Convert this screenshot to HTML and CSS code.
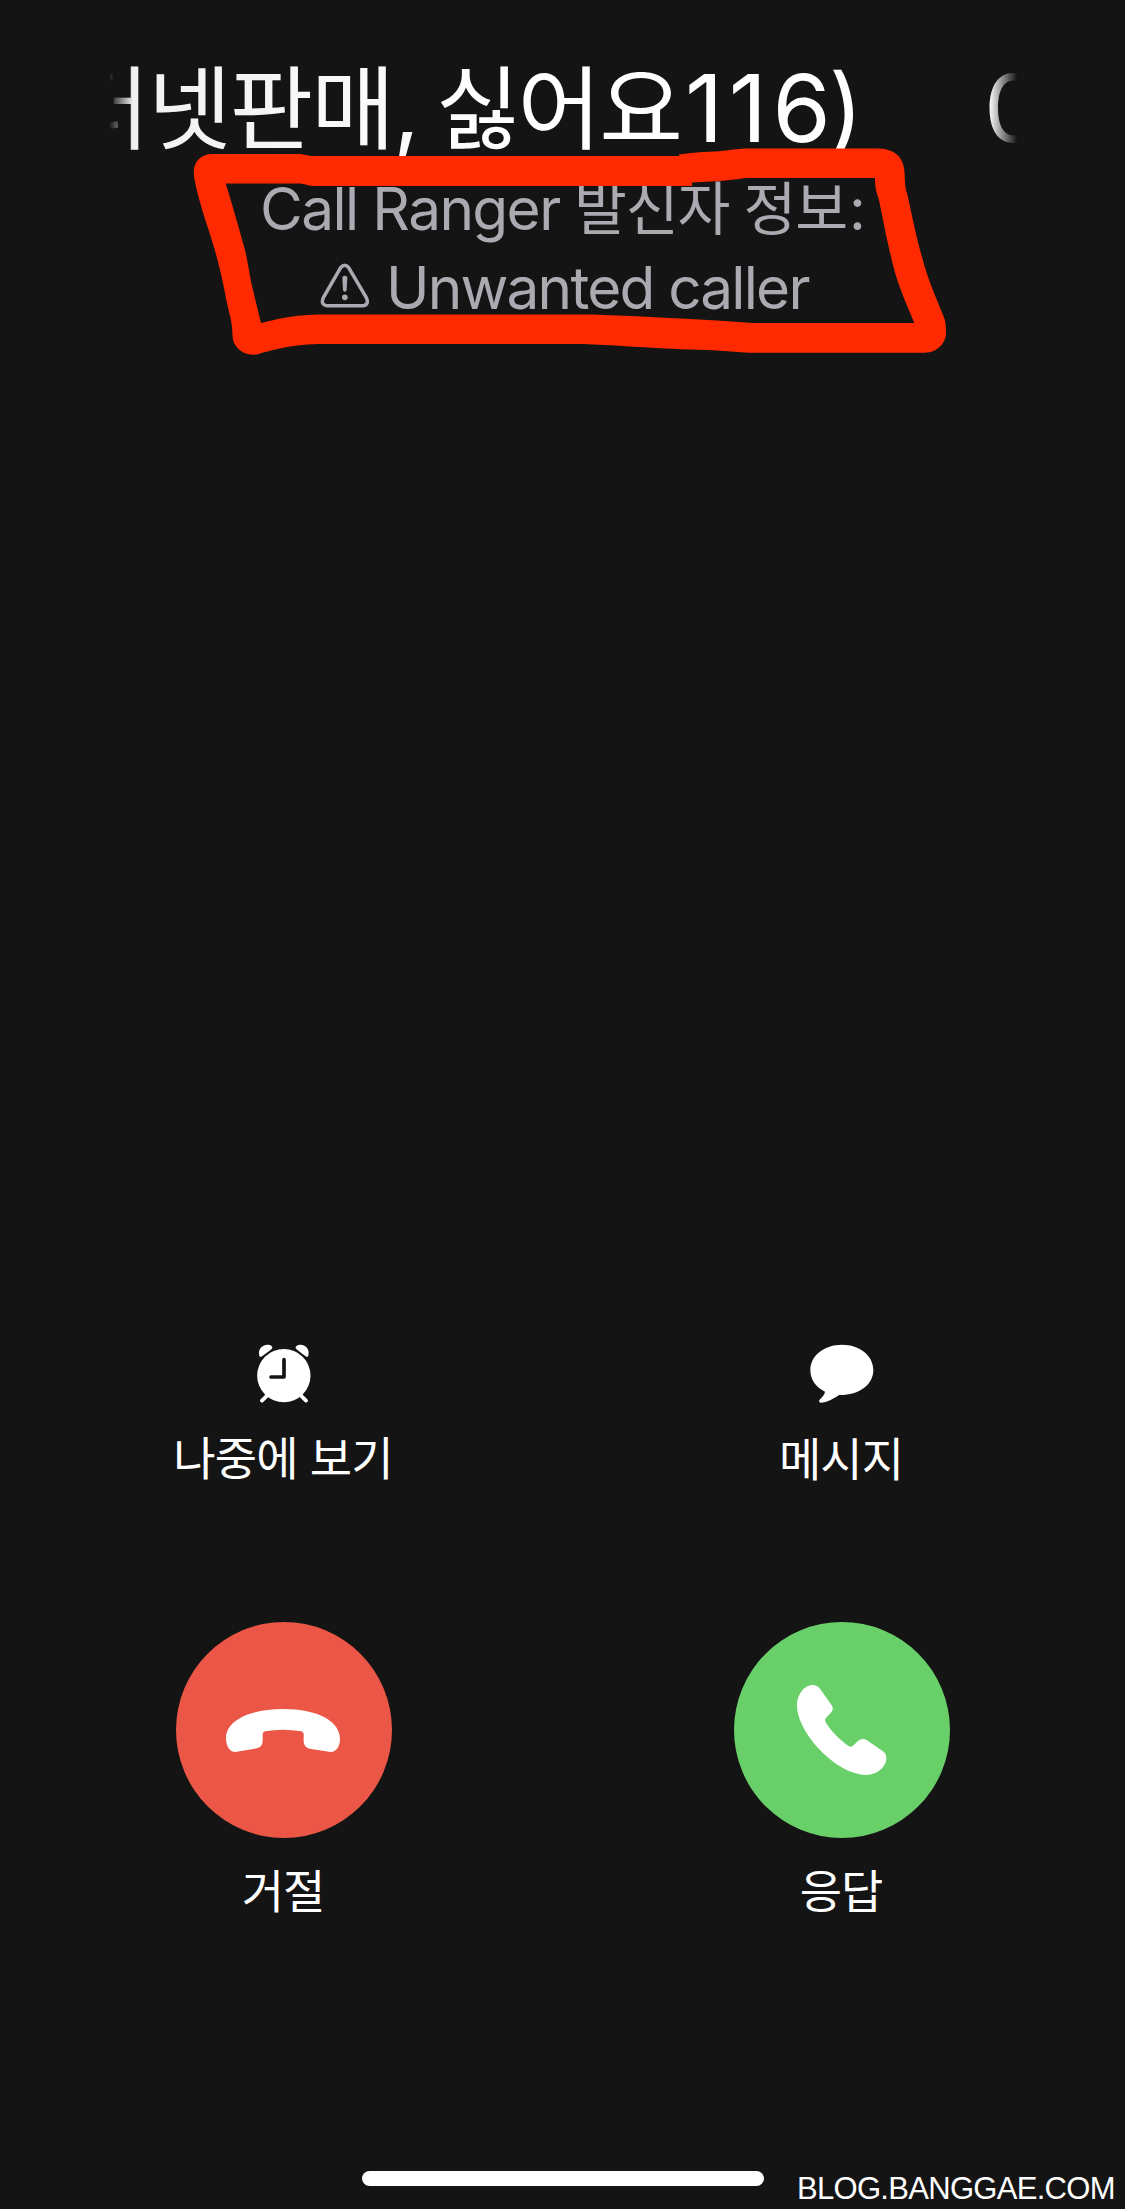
FILE: index.html
```html
<!DOCTYPE html>
<html lang="ko">
<head>
<meta charset="utf-8">
<title>수신 전화</title>
<link rel="stylesheet" href="styles.css">
</head>
<body>
<main class="call-screen">
  <header class="caller">
    <h1 class="marquee"><span class="marquee-text"><span class="ko">터넷판매</span><span class="comma">,</span><span class="ko">싫어요</span><span class="digits"><span class="ones">11</span>6)</span></span><span class="marquee-next">0</span></h1>
    <p class="source"><span class="source-app">Call Ranger</span><span class="source-ko">발신자</span><span class="source-ko">정보</span><span>:</span></p>
    <p class="verdict">
      <svg class="warning" viewBox="690 672 150 138" fill="none" stroke="#acaab1" stroke-linecap="round" stroke-linejoin="round">
        <path d="M752 686Q764 671 776 686L829 776Q838 797 820 800H710Q691 797 700 776Z" stroke-width="10.500"/>
        <path d="M757 716Q757 710 764.500 710T772 716L770 753Q769 758 764.500 758T759 753Z" fill="#acaab1" stroke="none"/>
        <circle cx="764.500" cy="775" r="8.500" fill="#acaab1" stroke="none"/>
      </svg>
      <span>Unwanted caller</span>
    </p>
    <svg class="marker" viewBox="180 140 780 230" fill="#ff2a00" fill-rule="evenodd">
      <path d="M212 154H298C304 154 307 156 314 156H679V154.500C690 153 698 152 715 151.500C728 151 735 148.500 749 148.500H879C895 149 904 158 904.500 172C905 182 905 188 907 193C913 220 917 240 922 257C928 280 935 295 943 315C946 322 946 326 946 333C946 343 937 352.700 925 352.700H750C735 352 715 350 690 349.500C645 348 600 344 580 344H325C290 344 275 350 263 352.500C257 355 253 355 252 354.700C240 354 232.500 345 232.500 335C232.500 320 229 315 225 293C222 277 220 270 216.700 256.700C213 243 209 231 204.300 216.700C200 202 197 192 195.300 183C194 177 193.800 175 193.800 171C194 161 202 154 212 154ZM225.700 183.500C232 204 239 228 245 250C249 268 250 278 253 290L261 323C275 320 290 314.500 325 314.500H580C610 314.500 650 317 690 319C715 320 735 322 752 323H914.300C906 303 898 285 893 265C888 245 885 230 879 200C877 193 875 190 875 178H752C740 178 735 180 720 181L692 182.500V186H314C308 186 305 183.500 298 183.500Z"/>
    </svg>
  </header>

  <section class="shortcuts">
    <div class="action">
      <svg class="clock" viewBox="290 70 162 177" fill="#fff">
        <circle cx="370.500" cy="165" r="80"/>
        <path d="M297 105C292 87 304 72 322 72C331 72 337 77 336 82C335 87 309 103 305 107Q299 111 297 105ZM444 105C449 87 437 72 421 72C412 72 405 77 406 82C407 87 432 103 436 107Q442 111 444 105Z"/>
        <path d="M318 227L305 240M424 227L437 240" stroke="#fff" stroke-width="11" stroke-linecap="round"/>
        <path d="M371 117V169H332" fill="none" stroke="#141414" stroke-width="11" stroke-linecap="round" stroke-linejoin="round"/>
      </svg>
      <span class="label">나중에 보기</span>
    </div>
    <div class="action">
      <svg class="bubble" viewBox="149 73 192 177" fill="#fff">
        <path d="M245 75C298 75 339 108 339 151C339 196 296 227 236 226C220 237 199 249 181 249C175 248 175 242 180 238C187 231 193 224 194 216C166 203 150 179 150 151C150 108 192 75 245 75Z"/>
      </svg>
      <span class="label">메시지</span>
    </div>
  </section>

  <section class="answers">
    <div class="action">
      <span class="round decline">
        <svg viewBox="48 66 648 648" fill="#fff"><path d="M369 327C475 327 540 364 540 417C540 438 529 456 512 456L449 446Q432 442 431 426V403Q431 396 424 394Q370 385 315 394Q308 396 308 403V424Q307 441 291 445L226 456C209 456 198 438 198 414C198 364 266 327 369 327Z"/></svg>
      </span>
      <span class="label">거절</span>
    </div>
    <div class="action">
      <span class="round accept">
        <svg viewBox="42 66 648 648" fill="#fff"><path d="M278 255Q292 255 300 266L335 316Q342 326 334 337L317 355Q313 360 317 367C330 391 361 422 386 438Q393 443 399 437L414 423Q427 412 441 421L491 455Q499 461 499 475C499 501 471 525 439 525C351 525 231 400 231 316C231 284 253 255 278 255Z"/></svg>
      </span>
      <span class="label">응답</span>
    </div>
  </section>

  <footer class="bottom">
    <span class="home-bar"></span>
    <span class="watermark">BLOG.BANGGAE.COM</span>
  </footer>
</main>
</body>
</html>
```
FILE: styles.css
```css
* { box-sizing: border-box; }
body {
  margin: 0;
  background: #141414;
  color: #fff;
  font-family: Inter, "Noto Sans CJK KR", sans-serif;
}
.call-screen {
  display: flex;
  flex-direction: column;
  width: 1125px;
  height: 2209px;
  overflow: hidden;
}
.caller {
  position: relative;
  height: 1343px;
  padding-top: 41px;
}
.marquee {
  display: flex;
  align-items: baseline;
  width: 908px;
  height: 125px;
  margin: 0 0 0 109px;
  overflow: hidden;
  font-size: 94px;
  font-weight: 400;
  line-height: 123px;
  white-space: nowrap;
  -webkit-mask-image: linear-gradient(90deg, transparent 0, rgba(0,0,0,.94) 24px, #000 400px, #000 880px, transparent 100%);
  mask-image: linear-gradient(90deg, transparent 0, rgba(0,0,0,.94) 24px, #000 400px, #000 880px, transparent 100%);
}
.marquee-text {
  display: flex;
  flex: none;
  align-items: baseline;
  width: 918px;
  margin-left: -43px;
}
.ko {
  font-family: "Noto Sans CJK KR", sans-serif;
  font-size: 91px;
  letter-spacing: -2px;
}
.comma { width: 43px; }
.digits { margin-left: 4px; letter-spacing: -2px; }
.ones { letter-spacing: 5.5px; }
.source,
.verdict {
  display: flex;
  align-items: baseline;
  height: 78px;
  margin: 0;
  color: #acaab1;
  font-size: 58.5px;
  line-height: 78px;
  white-space: nowrap;
}
.source { height: 83px; padding-left: 260px; }
.source-app { width: 314px; letter-spacing: -1.6px; }
.source-ko {
  margin-right: 14px;
  font-family: "Noto Sans CJK KR", sans-serif;
  font-size: 57.5px;
  letter-spacing: -1.1px;
}
.source-ko + .source-ko { margin-right: 2px; }
.verdict { padding-left: 320px; gap: 16px; letter-spacing: -1.8px; }
.warning { width: 50px; height: 46px; }
.marker {
  position: absolute;
  top: 140px;
  left: 180px;
  width: 780px;
  height: 230px;
}
.shortcuts,
.answers {
  display: flex;
  justify-content: space-between;
  padding: 0 175px 0 176px;
}
.shortcuts { height: 279px; }
.answers { height: 549px; }
.action {
  display: flex;
  flex-direction: column;
  align-items: center;
  width: 216px;
}
.clock { width: 54px; height: 59px; margin-top: 1px; }
.bubble { width: 64px; height: 59px; margin-top: 1px; }
.label {
  margin: 28px 2px 0 0;
  font-family: "Noto Sans CJK KR", sans-serif;
  font-size: 46px;
  line-height: 50px;
  letter-spacing: -1px;
  white-space: nowrap;
}
.clock + .label { margin-top: 27px; letter-spacing: -0.8px; }
.round {
  width: 216px;
  height: 216px;
  border-radius: 50%;
}
.round svg { display: block; width: 216px; height: 216px; }
.round + .label { margin-top: 25px; }
.decline { background: #ec5646; }
.accept { background: #68cf69; }
.bottom {
  display: flex;
  align-items: flex-start;
  height: 38px;
  padding-left: 362px;
}
.home-bar {
  width: 402px;
  height: 15px;
  border-radius: 8px;
  background: #fff;
}
.watermark {
  margin-left: 33px;
  font-family: "Liberation Sans", Arial, sans-serif;
  font-size: 31px;
  line-height: 35px;
  letter-spacing: -0.7px;
}
```
